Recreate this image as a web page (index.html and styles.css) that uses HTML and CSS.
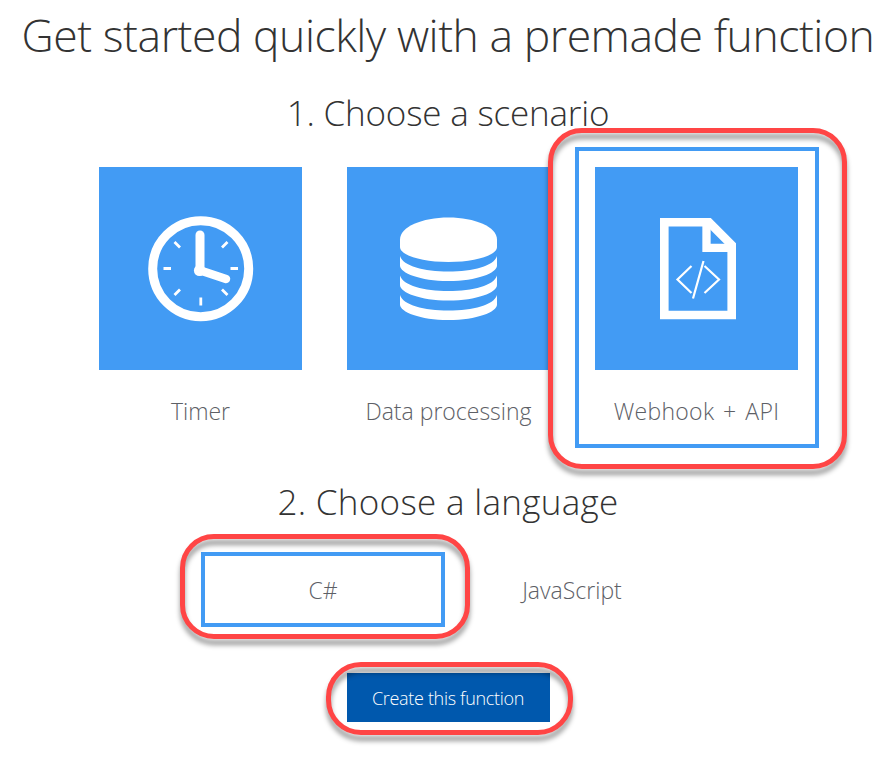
FILE: index.html
```html
<!DOCTYPE html>
<html lang="en">
<head>
<meta charset="utf-8">
<title>Get started</title>
<link rel="stylesheet" href="styles.css">
</head>
<body>
<main class="page">
  <h1 class="title">Get started quickly with a premade function</h1>
  <h2 class="step step-scenario">1. Choose a scenario</h2>
  <div class="scenarios">
    <div class="card">
      <div class="tile">
        <svg viewBox="0 0 203 203" fill="none" stroke="#fff">
          <circle cx="101.700" cy="101.700" r="48" stroke-width="9"/>
          <path d="M101 68v36" stroke-width="9" stroke-linecap="round"/>
          <path d="M101.500 103.500l25.500 8.500" stroke-width="8.500" stroke-linecap="round"/>
          <circle cx="100.500" cy="103.500" r="5.600" fill="#fff" stroke="none"/>
          <path d="M64.500 101.500h7.500M131.500 101.500h7.500M101.800 130.500v8M75.500 75l5.500 5.500M128.500 75l-5.500 5.500M75.500 128l5.500-5.500M128.500 128l-5.500-5.500" stroke-width="2.800"/>
        </svg>
      </div>
      <div class="label">Timer</div>
    </div>
    <div class="card">
      <div class="tile">
        <svg viewBox="0 0 203 203" fill="#fff">
          <path d="M53 72.500C53 60 75 50.500 101.500 50.500S150 60 150 72.500v7.500C150 88 129 95 101.500 95S53 88 53 80z"/>
          <path id="band" d="M53 89C56 99 77 104.500 101.500 104.500S147 99 150 89v9.500C150 106 130 114 101.500 114S53 106 53 98.500z"/>
          <use href="#band" y="19.500"/>
          <use href="#band" y="39"/>
        </svg>
      </div>
      <div class="label">Data processing</div>
    </div>
    <div class="card selected">
      <div class="tile">
        <svg viewBox="0 0 203 203" fill="none" stroke="#fff">
          <path d="M69.300 55.200H114L136.700 78V148H69.300z" stroke-width="8.600"/>
          <path d="M111.500 55V80.800H137" stroke-width="8.300"/>
          <path d="M96.500 99L82.500 112.500 96.500 126M109.500 99L124 112.500 109.500 126M108.500 94L98 131.500" stroke-width="2.200"/>
        </svg>
      </div>
      <div class="label label-webhook">Webhook + API</div>
      <div class="callout callout-card"></div>
    </div>
  </div>
  <h2 class="step step-language">2. Choose a language</h2>
  <div class="languages">
    <div class="lang selected">C#<div class="callout callout-lang"></div></div>
    <div class="lang">JavaScript</div>
  </div>
  <div class="actions">
    <button class="create" type="button">Create this function<i class="callout callout-create"></i></button>
  </div>
</main>
</body>
</html>
```
FILE: styles.css
```css
* { box-sizing: border-box; }
body {
  margin: 0;
  background: #fff;
  color: #333;
  font-family: "Open Sans", "Noto Sans", sans-serif;
  font-weight: 300;
}
.page {
  height: 761px;
  padding-left: 4px;
  display: flex;
  flex-direction: column;
  align-items: center;
  overflow: hidden;
}
h1, h2 { margin: 0; font-weight: 300; white-space: nowrap; }
.title { height: 72px; line-height: 70px; font-size: 44.5px; letter-spacing: -0.46px; }
.step { font-size: 35px; height: 52px; line-height: 52px; }
.step-scenario { margin-top: 15px; letter-spacing: -0.2px; }
.scenarios { display: flex; gap: 4px; margin: 8px 0 0 1px; }
.card {
  position: relative;
  width: 244px;
  height: 301px;
  padding: 16px;
  border: 4px solid transparent;
}
.selected { border-color: #429bf4; }
.tile { width: 203px; height: 203px; background: #429bf4; }
.tile svg { display: block; width: 203px; height: 203px; }
.label {
  width: 204px;
  height: 48px;
  margin-top: 17px;
  line-height: 48px;
  font-size: 23px;
  text-align: center;
  white-space: nowrap;
  color: #5d6066;
}
.label-webhook { letter-spacing: 0.3px; word-spacing: 2.5px; }
.step-language { margin-top: 28px; letter-spacing: 0.3px; }
.languages { display: flex; gap: 5px; margin: 24px 1px 0 0; }
.lang {
  position: relative;
  width: 244px;
  height: 75px;
  display: flex;
  align-items: center;
  justify-content: center;
  border: 4px solid transparent;
  font-size: 23px;
  color: #5d6066;
}
.lang.selected { border-color: #429bf4; }
.actions { margin-top: 46px; }
.create {
  position: relative;
  display: flex;
  align-items: center;
  justify-content: center;
  width: 203px;
  height: 49px;
  padding: 0;
  border: 0;
  background: #0058ad;
  color: #fff;
  font: 300 18px "Open Sans", "Noto Sans", sans-serif;
  letter-spacing: -0.32px;
  white-space: nowrap;
}
.callout {
  position: absolute;
  border: 5px solid #ff4545;
  filter: drop-shadow(0 6px 2.5px rgba(0, 0, 0, .4));
  pointer-events: none;
}
.callout-card { left: -31px; top: -23px; width: 299px; height: 341px; border-radius: 34px; }
.callout-lang { left: -25px; top: -22px; width: 290px; height: 105px; border-radius: 34px; }
.callout-create { left: -21px; top: -11px; width: 247px; height: 73px; border-radius: 35px; }
```
